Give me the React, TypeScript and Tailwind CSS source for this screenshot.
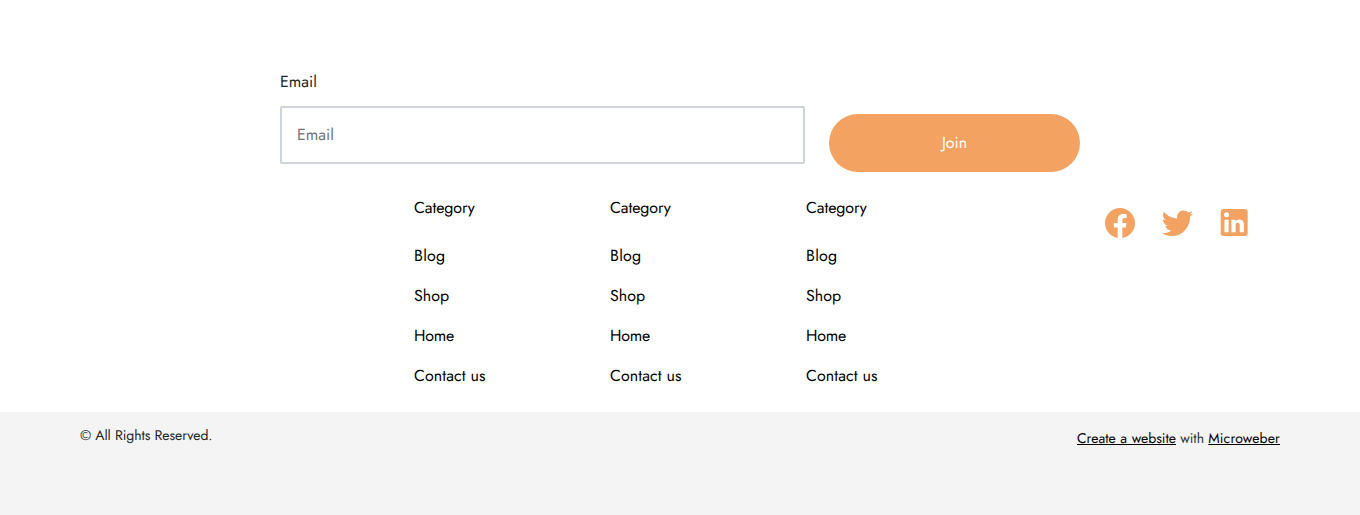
const links = [
  { label: "Blog", spacing: "tracking-[0.2px]" },
  { label: "Shop", spacing: "tracking-normal" },
  { label: "Home", spacing: "tracking-[-0.2px]" },
  { label: "Contact us", spacing: "tracking-[0.08px]" },
];

const icons = [
  {
    name: "Facebook",
    viewBox: "0 0 24 24",
    d: "M12 2.04C6.5 2.04 2 6.53 2 12.06C2 17.06 5.66 21.21 10.44 21.96V14.96H7.9V12.06H10.44V9.85C10.44 7.34 11.93 5.96 14.22 5.96C15.31 5.96 16.45 6.15 16.45 6.15V8.62H15.19C13.95 8.62 13.56 9.39 13.56 10.18V12.06H16.34L15.89 14.96H13.56V21.96A10 10 0 0 0 22 12.06C22 6.53 17.5 2.04 12 2.04Z",
  },
  {
    name: "Twitter",
    viewBox: "-0.3 0.33 24 24",
    d: "M22.46,6C21.69,6.35 20.86,6.58 20,6.69C20.88,6.16 21.56,5.32 21.88,4.31C21.05,4.81 20.13,5.16 19.16,5.36C18.37,4.5 17.26,4 16,4C13.65,4 11.73,5.92 11.73,8.29C11.73,8.63 11.77,8.96 11.84,9.27C8.28,9.09 5.11,7.38 3,4.79C2.63,5.42 2.42,6.16 2.42,6.94C2.42,8.43 3.17,9.75 4.33,10.5C3.62,10.5 2.96,10.3 2.38,10C2.38,10 2.38,10 2.38,10.03C2.38,12.11 3.86,13.85 5.82,14.24C5.46,14.34 5.08,14.39 4.69,14.39C4.42,14.39 4.15,14.36 3.89,14.31C4.43,16 6,17.26 7.89,17.29C6.43,18.45 4.58,19.13 2.56,19.13C2.22,19.13 1.88,19.11 1.54,19.07C3.44,20.29 5.7,21 8.12,21C16,21 20.33,14.46 20.33,8.79C20.33,8.6 20.33,8.42 20.32,8.23C21.16,7.63 21.88,6.87 22.46,6Z",
  },
  {
    name: "LinkedIn",
    viewBox: "-0.13 0.33 24 24",
    d: "M19 3A2 2 0 0 1 21 5V19A2 2 0 0 1 19 21H5A2 2 0 0 1 3 19V5A2 2 0 0 1 5 3H19M18.5 18.5V13.2A3.26 3.26 0 0 0 15.24 9.94C14.39 9.94 13.4 10.46 12.92 11.24V10.13H10.13V18.5H12.92V13.57C12.92 12.8 13.54 12.17 14.31 12.17A1.4 1.4 0 0 1 15.71 13.57V18.5H18.5M6.88 8.56A1.68 1.68 0 0 0 8.56 6.88C8.56 5.95 7.81 5.19 6.88 5.19A1.69 1.69 0 0 0 5.19 6.88C5.19 7.81 5.95 8.56 6.88 8.56M8.27 18.5V10.13H5.5V18.5H8.27Z",
  },
];

function NewsletterForm() {
  return (
    <form className="mx-auto flex w-[800px] gap-6 pt-[71px]" onSubmit={(e) => e.preventDefault()}>
      <div className="w-[525px]">
        <label htmlFor="email" className="block h-6 w-fit text-[#212529]">
          Email
        </label>
        <input
          id="email"
          type="email"
          placeholder="Email"
          className="mt-[11px] block h-[58px] w-full rounded-[2px] border-2 border-[#ced4da] bg-white px-[15px] outline-none [text-rendering:geometricPrecision] placeholder:text-[#6c757d]"
        />
      </div>
      <button className="mt-[43px] h-[58px] w-[251px] rounded-full bg-[#f4a261] pt-0.5 text-white [text-rendering:geometricPrecision]">
        Join
      </button>
    </form>
  );
}

function LinkColumn() {
  return (
    <nav className="w-[196px]">
      <h6 className="h-6 w-fit tracking-[-0.1px]">Category</h6>
      <ul className="mt-6 flex flex-col gap-4">
        {links.map((link) => (
          <li key={link.label} className="h-6">
            <a href="#" className={link.spacing}>{link.label}</a>
          </li>
        ))}
      </ul>
    </nav>
  );
}

export default function App() {
  return (
    <div className="flex h-[515px] flex-col bg-white font-['Jost','Lato',sans-serif] text-base text-black [text-rendering:geometricPrecision]">
      <NewsletterForm />
      <div className="flex h-[240px] pl-[414px] pt-[25px]">
        <LinkColumn />
        <LinkColumn />
        <LinkColumn />
        <div className="ml-[100px] flex gap-[21px] pt-2 text-[#f4a261]">
          {icons.map((icon) => (
            <a key={icon.name} href="#" aria-label={icon.name} className="block size-9">
              <svg viewBox={icon.viewBox} className="size-9" fill="currentColor">
                <path d={icon.d} />
              </svg>
            </a>
          ))}
        </div>
      </div>
      <footer className="flex flex-1 items-start justify-between bg-[#f4f4f4] px-20 text-sm">
        <p className="pt-3.5 tracking-[-0.06px] text-[#212529]">© All Rights Reserved.</p>
        <p className="pt-[17px] text-[#2d3135]">
          <a href="#" className="text-black underline [word-spacing:0.4px]">Create a website</a>
          {" "}with{" "}
          <a href="#" className="tracking-[0.15px] text-black underline">Microweber</a>
        </p>
      </footer>
    </div>
  );
}
